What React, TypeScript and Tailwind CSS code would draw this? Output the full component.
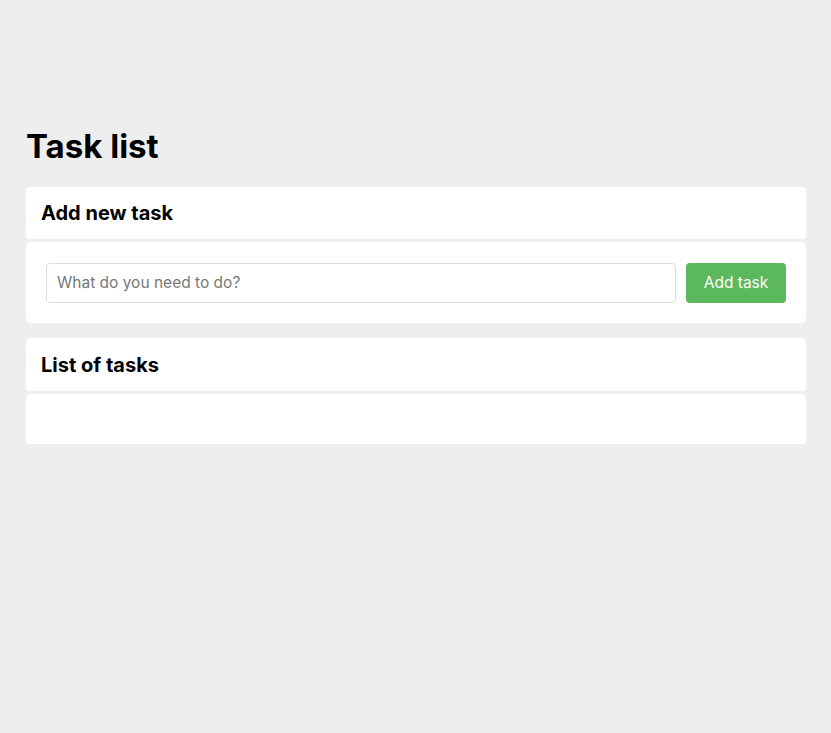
export default function App() {
  return (
    <div className="min-h-screen bg-[#eeeeee] pl-[26px] pr-[25px] pt-[126px]" style={{ fontFamily: "Inter, 'Noto Sans', sans-serif" }}>
      <h1 className="text-[33px] leading-[40px] font-bold text-black mb-[21px] tracking-[0px]">Task list</h1>
      <div className="flex flex-col gap-[3px]">
        <div className="bg-white rounded-[4px] h-[52px] flex items-center px-[15px]">
          <h2 className="text-[20px] font-bold text-black">Add new task</h2>
        </div>
        <div className="bg-white rounded-[4px] h-[81px] px-[20px] flex items-center gap-[10px]">
          <input
            type="text"
            placeholder="What do you need to do?"
            className="flex-1 h-[40px] border border-[#dddddd] rounded-[4px] px-[10px] text-[15.5px] text-[#333] placeholder:text-[#777777] outline-none"
          />
          <button className="w-[100px] h-[40px] bg-[#5cb85c] text-white text-[15.5px] rounded-[4px]">Add task</button>
        </div>
      </div>
      <div className="flex flex-col gap-[3px] mt-[15px]">
        <div className="bg-white rounded-[4px] h-[53px] flex items-center px-[15px]">
          <h2 className="text-[20px] font-bold text-black">List of tasks</h2>
        </div>
        <div className="bg-white rounded-[4px] h-[50px]"></div>
      </div>
    </div>
  );
}
